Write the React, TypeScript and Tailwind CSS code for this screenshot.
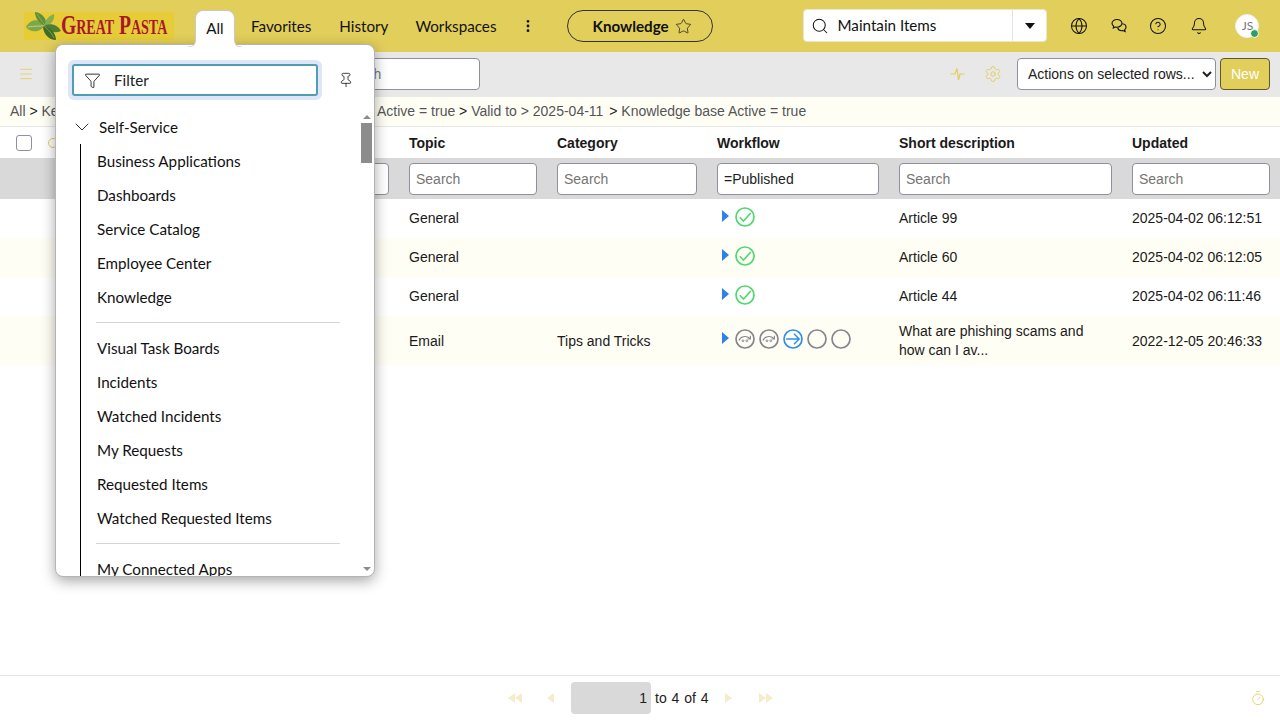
import React from "react";
import { Search, Globe, CircleHelp, Bell, Star, Funnel, Pin, EllipsisVertical, Menu, Settings, ChevronDown, Timer } from "lucide-react";

const nav = "font-['Lato','Noto_Sans',sans-serif] text-[15.2px]";

function Leaf() {
  return (
    <svg width="36" height="28" viewBox="0 0 36 28" className="shrink-0">
      <path d="M1 15C5 7 14 6 20 13C16 20 6 22 1 15Z" fill="#7fa648" />
      <path d="M10 0C17 1 22 6 21 14C15 12 10 7 10 0Z" fill="#5f8f38" />
      <path d="M29 2C30 8 26 13 20 15C19 9 23 4 29 2Z" fill="#86ad50" />
      <path d="M20 13C27 11 33 13 36 19C30 22 23 20 20 13Z" fill="#517f31" />
      <path d="M18 14C25 15 31 21 31 28C24 28 18 22 18 14Z" fill="#3f6d28" />
      <path d="M3 15C9 14 14 14 19 14" stroke="#d5e4a4" strokeWidth="0.7" fill="none" />
      <path d="M20 15C24 18 27 22 29 26" stroke="#8fb560" strokeWidth="0.7" fill="none" />
      <path d="M12 2C15 6 17 10 20 13" stroke="#9cc06a" strokeWidth="0.6" fill="none" />
    </svg>
  );
}

function Chat() {
  return (
    <svg width="16" height="16" viewBox="0 0 16 16" fill="none" stroke="#111" strokeWidth="1.1">
      <path d="M6 1.5C3.2 1.5 1 3.2 1 5.3C1 6.5 1.7 7.5 2.7 8.2L2.3 10L4.4 9C4.9 9.1 5.4 9.2 6 9.2C8.8 9.2 11 7.4 11 5.3C11 3.2 8.8 1.5 6 1.5Z" />
      <path d="M11.3 5.8C13.4 6 15 7.4 15 9.2C15 10.2 14.5 11 13.7 11.6L14.1 13.6L12 12.6C11.6 12.7 11.2 12.7 10.8 12.7C8.8 12.7 7.1 11.6 6.7 9.9" />
    </svg>
  );
}

function Pulse() {
  return (
    <svg width="15" height="16" viewBox="0 0 15 16" fill="none" stroke="#e2ce5b" strokeWidth="1.2">
      <path d="M0.5 8H5L7 2.5L8.5 14L10 8H14.5" />
    </svg>
  );
}

function WfIcon({ kind }: { kind: "done" | "skip" | "go" | "none" }) {
  const color = kind === "done" ? "#4fd86f" : kind === "go" ? "#2f8df0" : "#85858c";
  return (
    <svg width="20" height="20" viewBox="0 0 20 20" fill="none" stroke={color} strokeWidth="1.7" className="shrink-0">
      <circle cx="10" cy="10" r="9" />
      {kind === "done" && <path d="M4.8 10.3L8.5 14L15.8 6" strokeWidth="1.6" />}
      {kind === "go" && <path d="M3.2 10H16.2M11 4.8L16.2 10L11 15.2" strokeWidth="1.4" />}
      {kind === "skip" && (
        <>
          <path d="M4 11.5C5 7.5 11 6 15 9.5" strokeWidth="1.1" />
          <path d="M15.4 6.8V10H12.4" strokeWidth="1.1" />
          <circle cx="8" cy="11.8" r="0.9" strokeWidth="0.9" />
          <circle cx="11.8" cy="11.8" r="0.9" strokeWidth="0.9" />
        </>
      )}
    </svg>
  );
}

function Tri() {
  return <span className="w-0 h-0 border-y-[6px] border-y-transparent border-l-[7px] border-l-[#2f80e8] -mt-[2px] shrink-0" />;
}

const colInput =
  "h-8 rounded border border-[#8f8f9d] bg-white px-[6px] text-sm text-[#222] placeholder:text-[#757575] outline-none font-['Liberation_Sans',sans-serif]";

function Row({ tall, bg, topic, cat, wf, desc, upd }: { tall?: boolean; bg: string; topic: string; cat: string; wf: ("done" | "skip" | "go" | "none")[]; desc: React.ReactNode; upd: string }) {
  return (
    <div className={`flex items-center pl-[409px] text-sm text-[#1a1a1a] ${tall ? "h-[49px]" : "h-[39px] pb-[2px]"} ${bg}`}>
      <div className="w-[148px]">{topic}</div>
      <div className="w-[160px]">{cat}</div>
      <div className={`w-[182px] flex items-center pl-[5px] gap-[6px] ${tall ? "-mt-[3px]" : "-mt-[1px]"}`}>
        <Tri />
        <div className="flex gap-1">
          {wf.map((k, i) => (
            <WfIcon key={i} kind={k} />
          ))}
        </div>
      </div>
      <div className={`w-[233px] pr-5 leading-[19px] ${tall ? "" : "pt-[2px]"}`}>{desc}</div>
      <div className="whitespace-nowrap">{upd}</div>
    </div>
  );
}

function MenuItem({ children }: { children: React.ReactNode }) {
  return <div className="h-[34px] flex items-center text-[#111]">{children}</div>;
}

function PagerTri({ dir, double }: { dir: "l" | "r"; double?: boolean }) {
  const cls = dir === "l" ? "border-r-[7px] border-r-[#f5edc9]" : "border-l-[7px] border-l-[#f5edc9]";
  return (
    <div className="flex">
      <span className={`w-0 h-0 border-y-[5px] border-y-transparent ${cls}`} />
      {double && <span className={`w-0 h-0 border-y-[5px] border-y-transparent ${cls}`} />}
    </div>
  );
}

export default function App() {
  return (
    <div className="relative w-[1280px] h-[720px] overflow-hidden bg-white flex flex-col font-['Liberation_Sans',sans-serif]">
      {/* top nav */}
      <header className={`h-[52px] shrink-0 bg-[#e2ce5b] flex items-center pl-6 text-[#111] ${nav}`}>
        <div className="w-[150px] h-[28px] bg-[#e6cd38] flex items-center shrink-0 -mt-[1px]">
          <div className="ml-[1px]"><Leaf /></div>
          <span className="font-['Liberation_Serif',serif] font-bold text-[28px] leading-none text-[#a8182c] [font-variant:small-caps] scale-x-[0.7] origin-left whitespace-nowrap -mt-[2px]">
            Great Pasta
          </span>
        </div>
        <div className="relative z-30 ml-[21px] w-[40px] h-[36px] mt-[19px] self-start bg-white rounded-t-lg border border-b-0 border-[#c9c9c9] flex items-center justify-center pb-[1px] -translate-y-[9px]">
          All
          <svg width="8" height="8" viewBox="0 0 8 8" className="absolute -left-2 -bottom-px">
            <path d="M8 0V8H0C5 8 7.5 6 7.5 0Z" fill="white" />
            <path d="M7.5 0C7.5 6 5 8 0 8" fill="none" stroke="#c9c9c9" />
          </svg>
          <svg width="8" height="8" viewBox="0 0 8 8" className="absolute -right-2 -bottom-px">
            <path d="M0 0V8H8C3 8 .5 6 .5 0Z" fill="white" />
            <path d="M.5 0C.5 6 3 8 8 8" fill="none" stroke="#c9c9c9" />
          </svg>
        </div>
        <div className="ml-4">Favorites</div>
        <div className="ml-7">History</div>
        <div className="ml-[27px]">Workspaces</div>
        <EllipsisVertical size={16} strokeWidth={2.2} className="ml-6" />
        <div className="ml-[31px] w-[146px] h-8 rounded-full border border-[#333] flex items-center pl-6 font-bold gap-[6px]">
          Knowledge <Star size={17} strokeWidth={1} />
        </div>
        <div className="ml-[90px] w-[244px] h-[33px] bg-white rounded border border-[#e9e5cf] flex items-center -mt-[1px]">
          <Search size={18} strokeWidth={1.35} className="ml-[7px]" />
          <span className="ml-2 flex-1">Maintain Items</span>
          <div className="w-[34px] h-full border-l border-[#e5e5e5] flex items-center justify-center">
            <span className="w-0 h-0 border-x-[5px] border-x-transparent border-t-[6px] border-t-[#111]" />
          </div>
        </div>
        <Globe size={18} strokeWidth={1.35} className="ml-[23px]" />
        <div className="ml-[23px]"><Chat /></div>
        <CircleHelp size={18} strokeWidth={1.35} className="ml-[22px]" />
        <Bell size={18} strokeWidth={1.35} className="ml-[23px]" />
        <div className="relative ml-[27px] w-6 h-6 rounded-full bg-white flex items-center justify-center text-xs text-[#777] border border-[#eee]">
          JS
          <span className="absolute -right-px -bottom-px w-[9px] h-[9px] rounded-full bg-[#2f9e63] border border-white" />
        </div>
      </header>

      {/* toolbar */}
      <div className="h-[45px] shrink-0 bg-[#e8e8e8] flex items-center pl-[18px] pr-[10px] pb-[2px]">
        <Menu size={16} strokeWidth={1.3} className="text-[#e2ce5b]" />
        <input placeholder="Search" className={`${colInput} ml-[296px] w-[150px] rounded`} />
        <div className="flex-1" />
        <Pulse />
        <Settings size={18} strokeWidth={1.3} className="text-[#e2ce5b] ml-[19px]" />
        <select className="ml-[15px] w-[199px] h-8 rounded border border-[#8f8f9d] bg-white text-sm text-[#222] pl-[6px]">
          <option>Actions on selected rows...</option>
        </select>
        <button className="ml-1 w-[50px] h-8 rounded border border-[#5f5730] bg-[#e2ce5b] text-sm text-white">New</button>
      </div>

      {/* breadcrumb */}
      <div className="h-[30px] shrink-0 bg-[#fffef5] border-b border-[#e5e5e5] flex items-center pl-[10px] pb-[2px] text-sm text-[#555] whitespace-nowrap">
        <span className="w-[367px]">
          All <span className="text-[#222]">&gt;</span> Keywords
        </span>
        <span>
          Active = true <span className="text-[#222]">&gt;</span> Valid to &gt; 2025-04-11 <span className="text-[#222] ml-[2px]">&gt;</span> Knowledge base Active = true
        </span>
      </div>

      {/* column headers */}
      <div className="h-[31px] shrink-0 flex items-center text-sm font-bold text-[#1a1a1a]">
        <input type="checkbox" className="appearance-none ml-4 w-4 h-4 rounded-[3px] border border-[#8f8f9d] bg-white shrink-0" />
        <span className="ml-4 w-[10px] h-[10px] rounded-full border border-[#e2ce5b] shrink-0" />
        <div className="ml-[351px] w-[148px]">Topic</div>
        <div className="w-[160px]">Category</div>
        <div className="w-[182px]">Workflow</div>
        <div className="w-[233px]">Short description</div>
        <div>Updated</div>
      </div>

      {/* column search */}
      <div className="h-[41px] shrink-0 bg-[#d9d9d9] flex items-center pl-[260px] gap-5">
        <input placeholder="Search" className={`${colInput} w-[129px]`} />
        <input placeholder="Search" className={`${colInput} w-[128px]`} />
        <input placeholder="Search" className={`${colInput} w-[140px]`} />
        <input defaultValue="=Published" className={`${colInput} w-[162px]`} />
        <input placeholder="Search" className={`${colInput} w-[213px]`} />
        <input placeholder="Search" className={`${colInput} w-[138px]`} />
      </div>

      <Row bg="bg-white" topic="General" cat="" wf={["done"]} desc="Article 99" upd="2025-04-02 06:12:51" />
      <Row bg="bg-[#fffef5]" topic="General" cat="" wf={["done"]} desc="Article 60" upd="2025-04-02 06:12:05" />
      <Row bg="bg-white" topic="General" cat="" wf={["done"]} desc="Article 44" upd="2025-04-02 06:11:46" />
      <Row tall bg="bg-[#fffef5]" topic="Email" cat="Tips and Tricks" wf={["skip", "skip", "go", "none", "none"]} desc="What are phishing scams and how can I av..." upd="2022-12-05 20:46:33" />

      <div className="flex-1" />

      {/* footer */}
      <footer className="h-[45px] shrink-0 border-t border-[#e5e5e5] flex items-center text-sm text-[#222] pl-[508px] pr-[14px]">
        <PagerTri dir="l" double />
        <div className="ml-[25px]"><PagerTri dir="l" /></div>
        <div className="ml-[17px] w-20 h-8 rounded bg-[#d9d9d9] flex items-center justify-end pr-1 text-sm">1</div>
        <span className="ml-1 whitespace-nowrap [word-spacing:1px]">to 4 of 4</span>
        <div className="ml-[16px]"><PagerTri dir="r" /></div>
        <div className="ml-[27px]"><PagerTri dir="r" double /></div>
        <div className="flex-1" />
        <Timer size={16} strokeWidth={1.3} className="text-[#e2ce5b]" />
      </footer>

      {/* all-menu popover */}
      <div className={`absolute z-20 left-[55px] top-[44px] w-[320px] h-[533px] bg-white rounded-lg border border-[#b5b5b5] shadow-[0_4px_14px_rgba(0,0,0,0.35)] overflow-hidden ${nav}`}>
        <div className="flex items-center pl-[12px] pt-[15px]">
          <div className="w-[254px] h-[40px] rounded-md bg-[#dfe6f8] p-1 shrink-0">
            <div className="h-full rounded-[3px] border-2 border-[#4f9fb3] bg-white flex items-center pl-[10px]">
              <Funnel size={17} strokeWidth={1.2} className="text-[#111]" />
              <span className="ml-[13px] pt-px text-[#222]">Filter</span>
            </div>
          </div>
          <Pin size={16} strokeWidth={1.2} className="ml-4 text-[#111]" />
        </div>
        <div className="flex items-center pl-[14px] mt-[10px] h-[34px] text-[#111]">
          <ChevronDown size={24} strokeWidth={0.85} />
          <span className="ml-[5px]">Self-Service</span>
        </div>
        <div className="ml-[24px] border-l border-black pl-4 w-[260px] pb-10">
          <MenuItem>Business Applications</MenuItem>
          <MenuItem>Dashboards</MenuItem>
          <MenuItem>Service Catalog</MenuItem>
          <MenuItem>Employee Center</MenuItem>
          <MenuItem>Knowledge</MenuItem>
          <div className="h-px bg-[#d5d5d5] my-2 -ml-px" />
          <MenuItem>Visual Task Boards</MenuItem>
          <MenuItem>Incidents</MenuItem>
          <MenuItem>Watched Incidents</MenuItem>
          <MenuItem>My Requests</MenuItem>
          <MenuItem>Requested Items</MenuItem>
          <MenuItem>Watched Requested Items</MenuItem>
          <div className="h-px bg-[#d5d5d5] my-2 -ml-px" />
          <MenuItem>My Connected Apps</MenuItem>
        </div>
        <div className="absolute right-[2px] top-[70px] w-[11px] bottom-[5px] flex flex-col items-center">
          <span className="w-0 h-0 border-x-[4px] border-x-transparent border-b-[4px] border-b-[#8c8c8c]" />
          <div className="mt-[4px] w-full h-[40px] bg-[#8c8c8c]" />
          <div className="flex-1" />
          <span className="w-0 h-0 border-x-[4px] border-x-transparent border-t-[4px] border-t-[#8c8c8c]" />
        </div>
      </div>
    </div>
  );
}
